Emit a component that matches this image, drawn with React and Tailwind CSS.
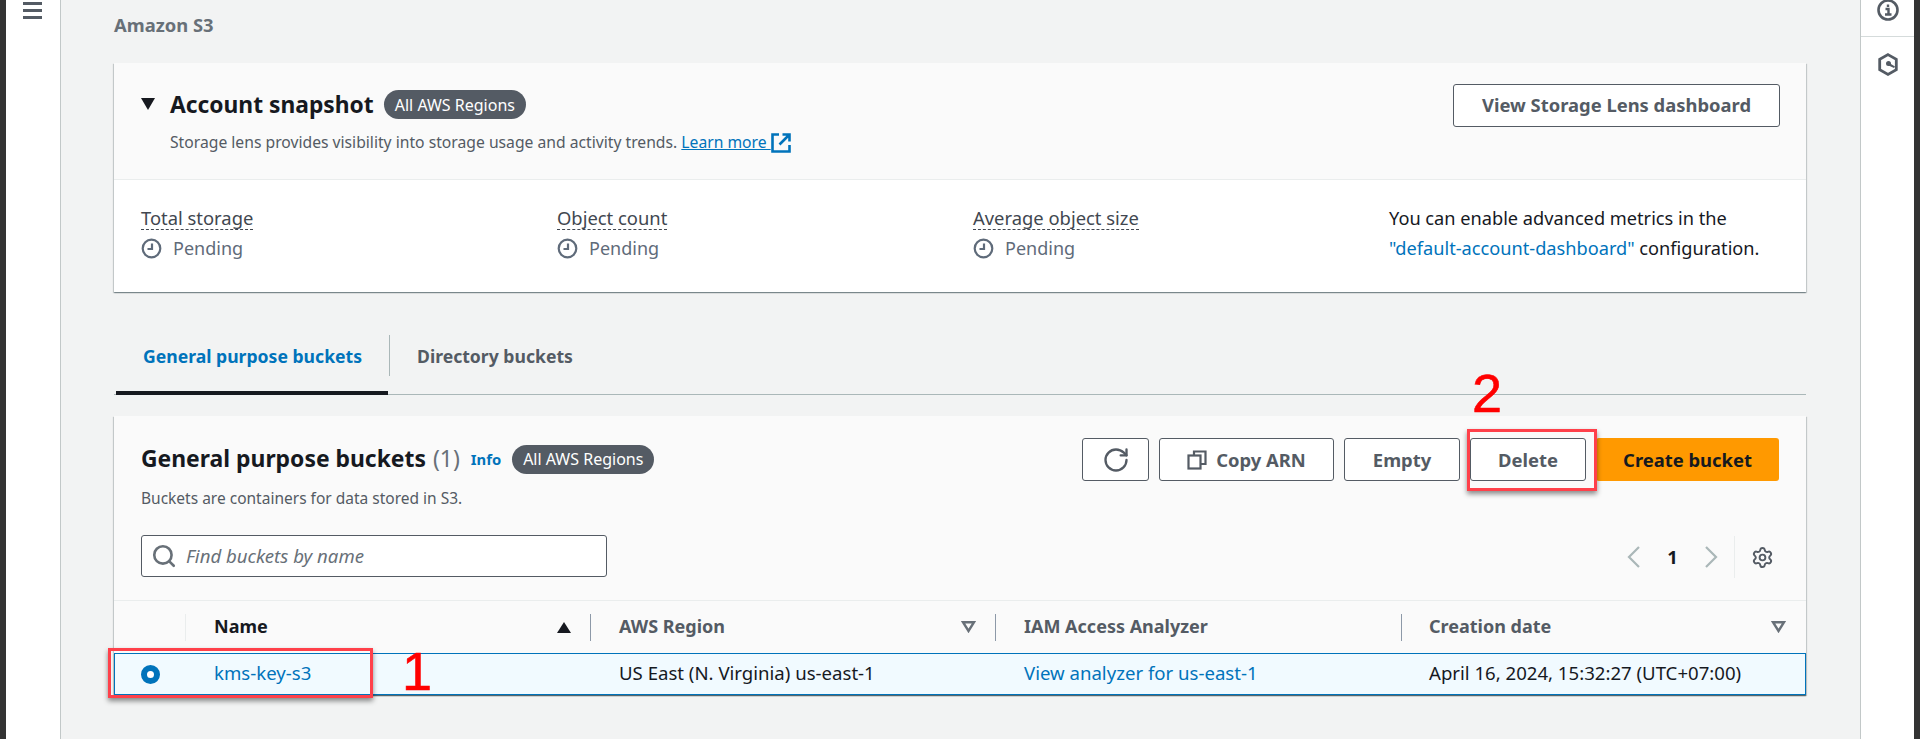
import { Settings, Search, RotateCw } from 'lucide-react';

const Clock = () => (
  <svg width="21" height="21" viewBox="0 0 21 21" fill="none" stroke="#5f6b7a" strokeWidth="2.2">
    <circle cx="10.5" cy="10.5" r="8.8" />
    <path d="M11 5.5v5.5H6.5" />
  </svg>
);

const External = () => (
  <svg width="20" height="20" viewBox="0 0 20 20" fill="none" stroke="#0073bb" strokeWidth="2.6" className="shrink-0">
    <path d="M8 1.5H1.5v17h17V12" />
    <path d="M11.5 1.5h7v7M18 2l-9.5 9.5" />
  </svg>
);

const Badge = () => (
  <span className="inline-flex items-center h-[29px] px-[11px] rounded-full bg-[#545b64] text-white text-[16px]">All AWS Regions</span>
);

const Metric = ({ label }) => (
  <div className="w-[416px]">
    <div className="h-[23px] leading-[21px] text-[18.4px] text-[#414750] border-b border-dashed border-[#414750] w-fit">{label}</div>
    <div className="flex items-center gap-[11px] mt-[8px] h-[21px] leading-[19px] text-[18px] text-[#5f6b7a]">
      <Clock />
      Pending
    </div>
  </div>
);

const Btn = ({ className = '', children }) => (
  <button className={`flex items-center justify-center h-[43px] rounded-[3px] border border-[#545b64] bg-white text-[#545b64] text-[18.4px] font-bold ${className}`}>{children}</button>
);

const Th = ({ className = '', children, sort, divider = true }) => (
  <div className={`flex items-center h-[27px] relative ${divider ? 'border-r border-[#8d99a8]' : ''} ${className}`}>
    {children}
    {sort}
  </div>
);

const SortDown = ({ className = '' }) => (
  <svg width="15" height="12" viewBox="0 0 15 12" fill="none" stroke="#687078" strokeWidth="2.4" className={className}>
    <path d="M2 1.2h11L7.500 10z" />
  </svg>
);

const PageArrow = ({ d }) => (
  <svg width="14" height="22" viewBox="0 0 14 22" fill="none" stroke="#aab7b8" strokeWidth="2.2">
    <path d={d} />
  </svg>
);

const CopyIcon = () => (
  <svg width="20" height="20" viewBox="0 0 20 20" fill="none" stroke="#545b64" strokeWidth="2.2">
    <path d="M7 5V1.5h11.5V14H14" />
    <rect x="1.5" y="5.5" width="12" height="13" />
  </svg>
);

export default function App() {
  return (
    <div className="flex h-[739px] overflow-hidden bg-white font-['Noto_Sans',sans-serif]">
      <div className="w-[6px] bg-[#333333]" />
      <div className="w-[55px] border-r border-[#c2c8c8] flex justify-center">
        <div className="flex flex-col gap-[4px] w-[19px] pt-[2px] mr-[2px]">
          <span className="h-[3px] bg-[#545b64]" />
          <span className="h-[3px] bg-[#545b64]" />
          <span className="h-[3px] bg-[#545b64]" />
        </div>
      </div>

      <main className="flex-1 bg-[#f2f3f3] pl-[53px] pr-[54px] relative">
        <div className="h-[63px] pt-[14px] text-[18.4px] leading-[22px] font-bold text-[#687078]">Amazon S3</div>

        <section className="bg-white shadow-[0_1px_1px_rgba(0,28,36,0.3),1px_1px_1px_rgba(0,28,36,0.15),-1px_1px_1px_rgba(0,28,36,0.15)]">
          <div className="h-[117px] bg-[#fafafa] border-b border-[#eaeded] pl-[27px] pr-[26px] pt-[21px] flex justify-between">
            <div className="flex">
              <svg width="14" height="12" viewBox="0 0 14 12" className="mt-[14px]"><path d="M0 0h14L7 12z" fill="#16191f" /></svg>
              <div className="ml-[15px]">
                <div className="flex items-center gap-[10px] h-[38px] pt-[3px]">
                  <span className="text-[22.8px] font-bold text-[#16191f] relative top-[1px]">Account snapshot</span>
                  <Badge />
                </div>
                <p className="mt-[9px] h-[24px] flex items-center text-[15.7px] text-[#545b64] whitespace-pre">
                  Storage lens provides visibility into storage usage and activity trends. <a className="text-[#0073bb] underline">Learn more </a>
                  <External />
                </p>
              </div>
            </div>
            <Btn className="w-[327px] pb-[2px]">View Storage Lens dashboard</Btn>
          </div>
          <div className="h-[112px] pl-[27px] pt-[27px] flex">
            <Metric label="Total storage" />
            <Metric label="Object count" />
            <Metric label="Average object size" />
            <div className="text-[18.2px] leading-[30px] text-[#16191f] -mt-[4px]">
              <div>You can enable advanced metrics in the</div>
              <div><a className="text-[#0073bb]">"default-account-dashboard"</a> configuration.</div>
            </div>
          </div>
        </section>

        <div className="mt-[43px] h-[60px] flex border-b border-[#aab7b8] relative">
          <div className="w-[272px] ml-[2px] flex items-center pb-[14px] pl-[27px] border-b-[4px] border-[#16191f] -mb-[1px] text-[17.6px] font-bold text-[#0073bb] h-[60px]">General purpose buckets</div>
          <div className="h-[41px] ml-[1px] self-start border-l border-[#aab7b8]" />
          <div className="flex items-center pl-[27px] pb-[17px] text-[17.6px] font-bold text-[#545b64]">Directory buckets</div>
        </div>

        <section className="mt-[21px] bg-[#fafafa] relative shadow-[0_1px_1px_rgba(0,28,36,0.3),1px_1px_1px_rgba(0,28,36,0.15),-1px_1px_1px_rgba(0,28,36,0.15)]">
          <div className="h-[184px] pl-[27px] pr-[27px] pt-[22px] flex justify-between">
            <div>
              <div className="flex items-center h-[38px] mt-[2px]">
                <span className="text-[22.9px] font-bold text-[#16191f]">General purpose buckets</span>
                <span className="text-[22.9px] text-[#687078] ml-[7px]">(1)</span>
                <span className="text-[14.8px] font-bold text-[#0073bb] ml-[11px]">Info</span>
                <span className="ml-[11px]"><Badge /></span>
              </div>
              <p className="mt-[9px] h-[22px] leading-[22px] text-[15.5px] text-[#545b64]">Buckets are containers for data stored in S3.</p>
              <div className="mt-[26px] w-[466px] h-[42px] border border-[#545b64] rounded-[3px] bg-white flex items-center pl-[9px] gap-[9px]">
                <Search size={26} color="#687078" strokeWidth={2.4} />
                <span className="italic text-[18.6px] text-[#687078]">Find buckets by name</span>
              </div>
            </div>
            <div className="flex flex-col items-end">
              <div className="flex gap-[10px]">
                <Btn className="w-[67px]"><RotateCw size={28} strokeWidth={2} /></Btn>
                <Btn className="w-[175px] gap-[9px]"><CopyIcon />Copy ARN</Btn>
                <Btn className="w-[116px]">Empty</Btn>
                <Btn className="w-[116px]">Delete</Btn>
                <button className="h-[43px] w-[183px] rounded-[3px] bg-[#ff9900] text-[#16191f] text-[18.4px] font-bold">Create bucket</button>
              </div>
              <div className="flex items-center h-[42px] mt-[55px] mr-[5px]">
                <PageArrow d="M12 1L2 11l10 10" />
                <span className="w-[63px] text-center text-[18.4px] font-bold text-[#16191f]">1</span>
                <PageArrow d="M2 1l10 10L2 21" />
                <div className="h-[42px] border-l border-[#eaeded] ml-[16px] mr-[16px]" />
                <Settings size={23} color="#545b64" strokeWidth={2} />
              </div>
            </div>
          </div>

          <div className="border-t border-[#eaeded] h-[53px] flex items-center text-[18px] leading-[25px] font-bold text-[#545b64]">
            <Th className="w-[72px] !border-[#eaeded]" />
            <Th className="w-[405px] pl-[28px] pr-[19px] justify-between text-[#16191f]" sort={<svg width="14" height="11" viewBox="0 0 14 11"><path d="M7 0l7 11H0z" fill="#16191f" /></svg>}><span className="-mt-[2px]">Name</span></Th>
            <Th className="w-[405px] pl-[28px] pr-[19px] justify-between" sort={<SortDown />}><span className="-mt-[2px]">AWS Region</span></Th>
            <Th className="w-[406px] pl-[28px]"><span className="-mt-[2px]">IAM Access Analyzer</span></Th>
            <Th className="flex-1 pl-[27px] pr-[20px] justify-between" divider={false} sort={<SortDown />}><span className="-mt-[2px]">Creation date</span></Th>
          </div>

          <div className="h-[42px] pb-[2px] flex items-center bg-[#f1faff] border border-[#0073bb] text-[18.6px] text-[#16191f] shadow-[0_1px_1px_rgba(0,28,36,0.3)]">
            <div className="w-[71px] flex justify-center pt-[2px]">
              <span className="w-[19px] h-[19px] rounded-full border-[6px] border-[#0073bb] bg-white" />
            </div>
            <a className="w-[405px] pl-[28px] text-[#0073bb]">kms-key-s3</a>
            <div className="w-[405px] pl-[28px]">US East (N. Virginia) us-east-1</div>
            <a className="w-[406px] pl-[28px] text-[#0073bb]">View analyzer for us-east-1</a>
            <div className="pl-[27px]">April 16, 2024, 15:32:27 (UTC+07:00)</div>
          </div>

          {/* annotations drawn over the screenshot */}
          <div className="absolute left-[-6px] top-[232px] w-[265px] h-[50px] border-[3px] border-[#ff404a] shadow-[0_3px_5px_rgba(0,0,0,0.45)]" />
          <span className="absolute left-[288px] top-[225px] text-[54px] leading-[60px] text-[#ff0000] [-webkit-text-stroke:0.6px_#ff0000] font-['Liberation_Sans',sans-serif]">1</span>
          <div className="absolute left-[1353px] top-[13px] w-[130px] h-[62px] border-[3px] border-[#ff404a] shadow-[0_3px_5px_rgba(0,0,0,0.45)]" />
          <span className="absolute left-[1358px] top-[-53px] text-[54px] leading-[60px] text-[#ff0000] [-webkit-text-stroke:0.6px_#ff0000] font-['Liberation_Sans',sans-serif]">2</span>
        </section>
      </main>

      <div className="w-[54px] border-l border-[#c2c8c8] flex flex-col">
        <div className="h-[37px] border-b border-[#d5dbdb] flex justify-center">
          <svg width="22" height="22" viewBox="0 0 22 22" fill="none" className="-mt-[1px]">
            <circle cx="11" cy="11" r="9.5" stroke="#545b64" strokeWidth="2.6" />
            <path d="M8.5 10h3v5M8 15.5h6.5M11 5.5v2.5" stroke="#545b64" strokeWidth="2.4" />
          </svg>
        </div>
        <div className="flex justify-center pt-[16px]">
          <svg width="20" height="23" viewBox="0 0 20 23" fill="none">
            <path d="M10 1.6l8.3 4.7v10.4L10 21.4l-8.3-4.7V6.300z" stroke="#545b64" strokeWidth="2.8" />
            <circle cx="10.500" cy="10.500" r="2.500" fill="#545b64" />
            <path d="M10.500 9.500l6.500 4-1 1.500-6.500-3z" fill="#545b64" />
          </svg>
        </div>
      </div>
      <div className="w-[6px] bg-[#333333]" />
    </div>
  );
}
